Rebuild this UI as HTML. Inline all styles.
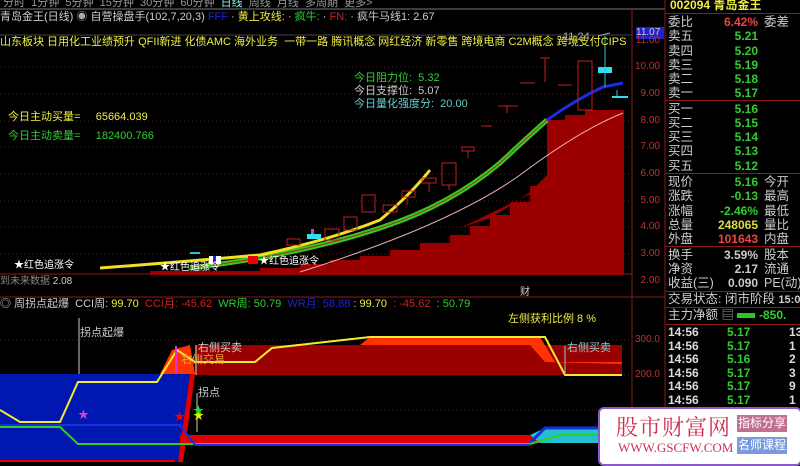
<!DOCTYPE html>
<html><head><meta charset="utf-8"><style>
body{margin:0;width:800px;height:464px;background:#000;overflow:hidden;position:relative;font-family:"Liberation Sans","Noto Sans CJK SC",sans-serif;}
.t{position:absolute;white-space:nowrap;font-size:11px;line-height:12px}
.rp{position:absolute;left:665px;width:135px;font-size:12.5px;color:#ccc;}
.r{position:absolute;left:3px;white-space:nowrap;line-height:14px}
.v{position:absolute;right:42px;text-align:right;line-height:14px;font-weight:bold;font-size:12px}
.v2{position:absolute;left:99px;line-height:14px;white-space:nowrap}
.g{color:#3c3}
</style></head><body>
<svg width="800" height="464" style="position:absolute;left:0;top:0">
<line x1="0" y1="9" x2="665" y2="9" stroke="#777" stroke-width="1"/>
<line x1="632" y1="9" x2="632" y2="464" stroke="#8b1a1a"/>
<line x1="665" y1="0" x2="665" y2="464" stroke="#8b1a1a"/>
<line x1="0" y1="297" x2="665" y2="297" stroke="#8b1a1a"/>
<line x1="0" y1="274" x2="632" y2="274" stroke="#8b1a1a"/>
<line x1="0" y1="35" x2="632" y2="35" stroke="#888" stroke-width="0.6"/>
<g stroke="#552222" stroke-dasharray="1,3">
<line x1="0" y1="67" x2="632" y2="67"/><line x1="0" y1="94" x2="632" y2="94"/><line x1="0" y1="121" x2="632" y2="121"/><line x1="0" y1="147" x2="632" y2="147"/><line x1="0" y1="174" x2="632" y2="174"/><line x1="0" y1="201" x2="632" y2="201"/><line x1="0" y1="227" x2="632" y2="227"/><line x1="0" y1="254" x2="632" y2="254"/>
<line x1="0" y1="340" x2="632" y2="340"/><line x1="0" y1="375" x2="632" y2="375"/><line x1="0" y1="410" x2="632" y2="410"/>
</g>
<path d="M150,275 L150,271 L260,271 L260,268 L300,268 L300,264 L330,264 L330,260 L360,260 L360,256 L390,256 L390,250 L420,250 L420,243 L450,243 L450,235 L470,235 L470,226 L490,226 L490,215 L510,215 L510,202 L530,202 L530,186 L547,186 L547,120 L565,120 L565,115 L585,115 L585,110 L624,110 L624,275 Z" fill="#9b0000"/>
<path d="M460,228 L490,218 L510,206 L530,192 L547,175 L547,186 Z" fill="#9b0000"/>
<path d="M300,272 Q450,225 520,175 Q580,130 623,113" stroke="#e8b0b0" fill="none" stroke-width="1"/>
<path d="M190,268 Q300,255 383,227 Q450,205 500,163 Q530,135 547,120" stroke="#33cc22" fill="none" stroke-width="5"/>
<path d="M190,268 Q300,255 383,227 Q450,205 500,163 Q530,135 547,120" stroke="#a03020" fill="none" stroke-width="1"/>
<path d="M547,120 Q575,100 603,87 L623,83" stroke="#1a2ee0" fill="none" stroke-width="3"/>
<path d="M100,268 Q180,262 260,255 Q330,240 380,220 Q410,195 430,170" stroke="#f0e020" fill="none" stroke-width="3"/>
<g stroke="#c02020" fill="none" stroke-width="1">
<rect x="287" y="239" width="13" height="6"/><rect x="325" y="229" width="14" height="11"/><rect x="344" y="217" width="13" height="13"/><rect x="362" y="195" width="13" height="17"/><rect x="383" y="205" width="14" height="7"/><rect x="402" y="191" width="13" height="6"/><rect x="422" y="178" width="14" height="5"/><rect x="442" y="163" width="14" height="22"/><rect x="462" y="147" width="12" height="4"/><rect x="578" y="61" width="14" height="49"/>
<line x1="407" y1="197" x2="407" y2="205"/><line x1="429" y1="183" x2="429" y2="192"/><line x1="449" y1="185" x2="449" y2="190"/><line x1="468" y1="151" x2="468" y2="158"/><line x1="481" y1="126" x2="492" y2="126"/><line x1="507" y1="106" x2="507" y2="113"/><line x1="498" y1="106" x2="518" y2="106"/><line x1="520" y1="83" x2="535" y2="83"/><line x1="545" y1="58" x2="545" y2="82"/><line x1="540" y1="58" x2="550" y2="58"/><line x1="558" y1="85" x2="572" y2="85"/>
</g>
<rect x="598" y="67" width="14" height="6" fill="#30e0f0"/><line x1="605" y1="36" x2="605" y2="87" stroke="#30c0d0"/><line x1="598" y1="36" x2="610" y2="33" stroke="#aaa"/>
<line x1="617" y1="90" x2="617" y2="97" stroke="#30c0d0"/><line x1="612" y1="97" x2="628" y2="97" stroke="#30e0f0" stroke-width="2"/>
<rect x="307" y="234" width="14" height="5" fill="#30e0f0"/><rect x="311" y="229" width="3" height="5" fill="#d040d0"/>
<rect x="209" y="256" width="12" height="8" fill="#fff"/><rect x="213" y="256" width="3" height="8" fill="#22d"/>
<rect x="248" y="256" width="10" height="8" fill="#e00"/>
<line x1="190" y1="253" x2="200" y2="253" stroke="#30c0d0" stroke-width="2"/>
<path d="M0,374 L190,374 L178,462 L0,462 Z" fill="#0018b0"/>
<path d="M178,462 L190,374 L195,374 L183,462 Z" fill="#e00000"/>
<path d="M160,374 L172,350 L190,345 L195,374 Z" fill="#ff3300"/>
<path d="M195,345 L622,345 L622,375 L195,375 Z" fill="#9b0000"/>
<path d="M360,345 L370,337 L540,337 L555,362 L622,362 L622,364 L545,362 L530,345 Z" fill="#ff3300"/>
<path d="M0,410 L20,422 L60,422 L78,382 L157,382 L177,350 L195,362 L255,362 L272,348 L370,337 L545,337 L565,375 L622,375" stroke="#f8e830" fill="none" stroke-width="2"/>
<path d="M180,435 L530,435 L540,443 L180,444 Z" fill="#e00000"/>
<path d="M530,435 L545,428 L622,428 L622,443 L540,443 Z" fill="#20c0d0"/>
<path d="M530,443 L545,428 L622,428" stroke="#1a2ee0" fill="none" stroke-width="3"/>
<path d="M0,427 L60,427 L78,444 L188,444 L530,444 L560,435 L622,435" stroke="#33cc22" fill="none" stroke-width="2"/>
<path d="M0,425 L180,425 L195,445 L530,445" stroke="#1a2ee0" fill="none" stroke-width="2"/>
<path d="M0,461 L175,461" stroke="#e00000" stroke-width="2"/>
<line x1="79" y1="318" x2="79" y2="374" stroke="#ccc"/><line x1="176" y1="346" x2="176" y2="374" stroke="#e030e0" stroke-width="2"/>
<line x1="196" y1="345" x2="196" y2="375" stroke="#ccc"/><line x1="197" y1="393" x2="197" y2="432" stroke="#ccc"/>
<line x1="565" y1="346" x2="565" y2="375" stroke="#8cc"/>
<text x="78" y="418" fill="#d040d0" font-size="11">★</text><text x="174" y="420" fill="#e00" font-size="11">★</text><text x="193" y="419" fill="#ee0" font-size="11">★</text><text x="193" y="414" fill="#2d2" font-size="11">★</text>
</svg>

<div class="t" style="left:0;top:-3px;color:#999;font-size:11px">&nbsp;分时 &nbsp;1分钟 &nbsp;5分钟 &nbsp;15分钟 &nbsp;30分钟 &nbsp;60分钟 &nbsp;<span style="color:#8ee">日线</span> &nbsp;周线 &nbsp;月线 &nbsp;多周期 &nbsp;更多&gt;</div>
<div class="t" style="left:0;top:11px;color:#ccc">青岛金王(日线) <span style="color:#aaa">◉</span> 自营操盘手(102,7,20,3) <span style="color:#22c">FFF</span> · <span style="color:#ee4">黄上攻线:</span> · <span style="color:#3c3">疯牛:</span> · <span style="color:#c22">FN:</span> · <span style="color:#ccc">疯牛马线1: 2.67</span></div>
<div class="t" style="left:0;top:36px;color:#ee4">山东板块 日用化工业绩预升 QFII新进 化债AMC 海外业务 &nbsp;一带一路 腾讯概念 网红经济 新零售 跨境电商 C2M概念 跨境支付CIPS</div>
<div class="t" style="left:563px;top:31px;color:#aaa">11.24</div>
<div class="t" style="left:354px;top:72px;color:#3c3">今日阻力位: &nbsp;5.32</div>
<div class="t" style="left:354px;top:85px;color:#ccc">今日支撑位: &nbsp;5.07</div>
<div class="t" style="left:354px;top:98px;color:#6cc">今日量化强度分: &nbsp;20.00</div>
<div class="t" style="left:8px;top:111px;color:#ee4">今日主动买量= &nbsp;&nbsp;&nbsp;&nbsp;65664.039</div>
<div class="t" style="left:8px;top:130px;color:#3c3">今日主动卖量= &nbsp;&nbsp;&nbsp;&nbsp;182400.766</div>
<div class="t" style="left:14px;top:260px;color:#fff;font-size:10px">★红色追涨令</div>
<div class="t" style="left:160px;top:262px;color:#fff;font-size:10px">★红色追涨令</div>
<div class="t" style="left:259px;top:256px;color:#fff;font-size:10px">★红色追涨令</div>
<div class="t" style="left:0;top:276px;color:#888;font-size:10px">到未来数据 <span style="color:#ccc">2.08</span></div>
<div class="t" style="left:520px;top:287px;color:#ccc;font-size:10px">财</div>
<div class="t" style="left:0;top:298px;color:#ccc">◎ 周拐点起爆 &nbsp;CCI周: <span style="color:#ee4">99.70</span> &nbsp;<span style="color:#c22">CCI月: -45.62</span> &nbsp;<span style="color:#3c3">WR周: 50.79</span> &nbsp;<span style="color:#22c">WR月: 58.88</span> : <span style="color:#ee4">99.70</span> &nbsp;<span style="color:#c22">: -45.62</span> &nbsp;<span style="color:#3c3">: 50.79</span></div>
<div class="t" style="left:80px;top:327px;color:#ccc">拐点起爆</div>
<div class="t" style="left:198px;top:342px;color:#ccc">右侧买卖</div>
<div class="t" style="left:181px;top:354px;color:#e8a040">右侧交易</div>
<div class="t" style="left:198px;top:387px;color:#ccc">拐点</div>
<div class="t" style="left:508px;top:313px;color:#ee4">左侧获利比例 8 %</div>
<div class="t" style="left:567px;top:342px;color:#8cc">右侧买卖</div>
<div class="t" style="left:636px;top:27px;width:28px;background:#2222cc;color:#ccc;font-size:10px">11.07</div>
<div style="position:absolute;left:633px;top:36px;width:27px;color:#b33;font-size:10px;line-height:10px;text-align:right">
<div style="position:absolute;top:0;right:0">11.00</div><div style="position:absolute;top:26px;right:0">10.00</div><div style="position:absolute;top:53px;right:0">9.00</div><div style="position:absolute;top:80px;right:0">8.00</div><div style="position:absolute;top:106px;right:0">7.00</div><div style="position:absolute;top:133px;right:0">6.00</div><div style="position:absolute;top:160px;right:0">5.00</div><div style="position:absolute;top:186px;right:0">4.00</div><div style="position:absolute;top:213px;right:0">3.00</div><div style="position:absolute;top:240px;right:0">2.00</div>
<div style="position:absolute;top:299px;right:0">300.0</div><div style="position:absolute;top:334px;right:0">200.0</div></div>
<div class="rp" style="top:0;height:464px">
<div class="r" style="top:-2px;left:5px;color:#ee4;font-weight:bold;font-size:12px">002094 青岛金王</div>
<div style="position:absolute;top:13px;left:0;width:135px;border-top:1px solid #8b1a1a"></div>
<div class="r" style="top:15px">委比</div><div class="v" style="top:15px;color:#e44">6.42%</div><div class="v2" style="top:15px">委差</div>
<div class="r" style="top:29px">卖五</div><div class="v g" style="top:29px">5.21</div>
<div class="r" style="top:44px">卖四</div><div class="v g" style="top:44px">5.20</div>
<div class="r" style="top:58px">卖三</div><div class="v g" style="top:58px">5.19</div>
<div class="r" style="top:72px">卖二</div><div class="v g" style="top:72px">5.18</div>
<div class="r" style="top:86px">卖一</div><div class="v g" style="top:86px">5.17</div>
<div style="position:absolute;top:100px;left:0;width:135px;border-top:1px solid #8b1a1a"></div>
<div class="r" style="top:102px">买一</div><div class="v g" style="top:102px">5.16</div>
<div class="r" style="top:116px">买二</div><div class="v g" style="top:116px">5.15</div>
<div class="r" style="top:130px">买三</div><div class="v g" style="top:130px">5.14</div>
<div class="r" style="top:144px">买四</div><div class="v g" style="top:144px">5.13</div>
<div class="r" style="top:159px">买五</div><div class="v g" style="top:159px">5.12</div>
<div style="position:absolute;top:173px;left:0;width:135px;border-top:1px solid #8b1a1a"></div>
<div class="r" style="top:175px">现价</div><div class="v g" style="top:175px">5.16</div><div class="v2" style="top:175px">今开</div>
<div class="r" style="top:189px">涨跌</div><div class="v g" style="top:189px">-0.13</div><div class="v2" style="top:189px">最高</div>
<div class="r" style="top:204px">涨幅</div><div class="v g" style="top:204px">-2.46%</div><div class="v2" style="top:204px">最低</div>
<div class="r" style="top:218px">总量</div><div class="v" style="top:218px;color:#dd4">248065</div><div class="v2" style="top:218px">量比</div>
<div class="r" style="top:232px">外盘</div><div class="v" style="top:232px;color:#e44">101643</div><div class="v2" style="top:232px">内盘</div>
<div style="position:absolute;top:246px;left:0;width:135px;border-top:1px solid #8b1a1a"></div>
<div class="r" style="top:248px">换手</div><div class="v" style="top:248px">3.59%</div><div class="v2" style="top:248px">股本</div>
<div class="r" style="top:262px">净资</div><div class="v" style="top:262px">2.17</div><div class="v2" style="top:262px">流通</div>
<div class="r" style="top:276px">收益(三)</div><div class="v" style="top:276px">0.090</div><div class="v2" style="top:276px">PE(动)</div>
<div style="position:absolute;top:291px;left:0;width:135px;border-top:1px solid #8b1a1a"></div>
<div class="r" style="top:292px">交易状态: 闭市阶段 <b style="font-size:11px">15:0</b></div>
<div style="position:absolute;top:307px;left:0;width:135px;border-top:1px solid #8b1a1a"></div>
<div class="r" style="top:308px">主力净额 <span style="color:#999">▤</span> <span style="display:inline-block;width:18px;height:5px;background:#2c2;vertical-align:middle"></span> <b class="g" style="font-size:12px">-850.</b></div>
<div style="position:absolute;top:324px;left:0;width:135px;border-top:1px solid #8b1a1a"></div>
<div style="position:absolute;top:326px;left:3px;font-size:12px;font-weight:bold;line-height:13.6px;color:#ddd">14:56<br>14:56<br>14:56<br>14:56<br>14:56<br>14:56</div>
<div style="position:absolute;top:326px;left:62px;font-size:12px;font-weight:bold;line-height:13.6px;color:#3c3">5.17<br>5.17<br>5.16<br>5.17<br>5.17<br>5.17</div>
<div style="position:absolute;top:326px;left:124px;font-size:12px;font-weight:bold;line-height:13.6px;color:#ddd">13<br>1<br>2<br>3<br>9<br>1</div>
</div>
<div style="position:absolute;left:598px;top:407px;width:200px;height:55px;background:#fff;border:2px solid #8a5ac8;border-radius:6px;">
<div style="position:absolute;left:16px;top:2px;font-size:22px;color:#d03050;font-family:'Noto Serif CJK SC',serif;letter-spacing:1px">股市财富网</div>
<div style="position:absolute;left:18px;top:31px;font-size:13px;color:#d03050;font-family:'Liberation Serif',serif">WWW.GSCFW.COM</div>
<div style="position:absolute;left:137px;top:6px;width:50px;height:17px;background:#c07090;color:#fff;font-size:12px;text-align:center;line-height:17px">指标分享</div>
<div style="position:absolute;left:137px;top:28px;width:50px;height:17px;background:#7a9ae0;color:#fff;font-size:12px;text-align:center;line-height:17px">名师课程</div>
</div>
</body></html>
